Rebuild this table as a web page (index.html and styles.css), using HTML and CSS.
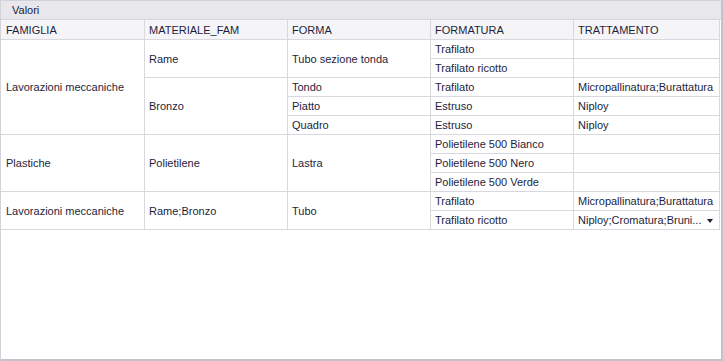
FILE: index.html
```html
<!DOCTYPE html>
<html lang="it">
<head>
<meta charset="utf-8">
<title>Valori</title>
<link rel="stylesheet" href="styles.css">
</head>
<body>
<div class="panel">
  <div class="title">Valori</div>
  <div class="grid">
    <div class="hd c1">FAMIGLIA</div>
    <div class="hd">MATERIALE_FAM</div>
    <div class="hd">FORMA</div>
    <div class="hd">FORMATURA</div>
    <div class="hd last">TRATTAMENTO</div>

    <div class="cell c1 span5">Lavorazioni meccaniche</div>
    <div class="cell span2">Rame</div>
    <div class="cell span2">Tubo sezione tonda</div>
    <div class="cell">Trafilato</div>
    <div class="cell last"></div>

    <div class="cell">Trafilato ricotto</div>
    <div class="cell last"></div>

    <div class="cell span3">Bronzo</div>
    <div class="cell">Tondo</div>
    <div class="cell">Trafilato</div>
    <div class="cell last">Micropallinatura;Burattatura</div>

    <div class="cell">Piatto</div>
    <div class="cell">Estruso</div>
    <div class="cell last">Niploy</div>

    <div class="cell">Quadro</div>
    <div class="cell">Estruso</div>
    <div class="cell last">Niploy</div>

    <div class="cell c1 span3">Plastiche</div>
    <div class="cell span3">Polietilene</div>
    <div class="cell span3">Lastra</div>
    <div class="cell">Polietilene 500 Bianco</div>
    <div class="cell last"></div>

    <div class="cell">Polietilene 500 Nero</div>
    <div class="cell last"></div>

    <div class="cell">Polietilene 500 Verde</div>
    <div class="cell last"></div>

    <div class="cell c1 span2">Lavorazioni meccaniche</div>
    <div class="cell span2">Rame;Bronzo</div>
    <div class="cell span2">Tubo</div>
    <div class="cell">Trafilato</div>
    <div class="cell last">Micropallinatura;Burattatura</div>

    <div class="cell">Trafilato ricotto</div>
    <div class="cell last combo"><span class="combo-text">Niploy;Cromatura;Bruni...</span><span class="arrow"></span></div>
  </div>
</div>
</body>
</html>
```
FILE: styles.css
```css
html, body {
  margin: 0;
  padding: 0;
  background: #ffffff;
}

body {
  font-family: "Liberation Sans", Arial, sans-serif;
  font-size: 11px;
  color: #1e1e3c;
}

.panel {
  width: 723px;
  height: 361px;
  box-sizing: border-box;
  border-left: 1px solid #d2d2d8;
  border-top: 1px solid #d2d2d8;
  border-right: 2px solid #c2c2ca;
  border-bottom: 2px solid #c2c2ca;
  background: #ffffff;
  display: flex;
  flex-direction: column;
}

.title {
  height: 19px;
  box-sizing: border-box;
  border-bottom: 1px solid #d4d4da;
  background: #e8e8ec;
  padding: 3px 0 0 11px;
  line-height: 13px;
  color: #20203e;
}

.grid {
  display: grid;
  grid-template-columns: 144px 143px 143px 143px 146px;
  grid-template-rows: 20px repeat(10, 19px);
}

.hd, .cell {
  box-sizing: border-box;
  border-right: 1px solid #d8d8de;
  border-bottom: 1px solid #d8d8de;
  padding: 0 4px;
  display: flex;
  align-items: center;
  white-space: nowrap;
  overflow: hidden;
}

.hd {
  background: #f5f5f7;
  padding-top: 1px;
}

.c1 {
  padding-left: 5px;
}

.span2 { grid-row: span 2; }
.span3 { grid-row: span 3; }
.span5 { grid-row: span 5; }

.combo {
  justify-content: space-between;
  padding-right: 0;
}

.combo-text {
  overflow: hidden;
}

.arrow {
  width: 0;
  height: 0;
  border-left: 3.5px solid transparent;
  border-right: 3.5px solid transparent;
  border-top: 4px solid #1e1e30;
  margin-right: 6px;
  margin-top: 1px;
}
```
